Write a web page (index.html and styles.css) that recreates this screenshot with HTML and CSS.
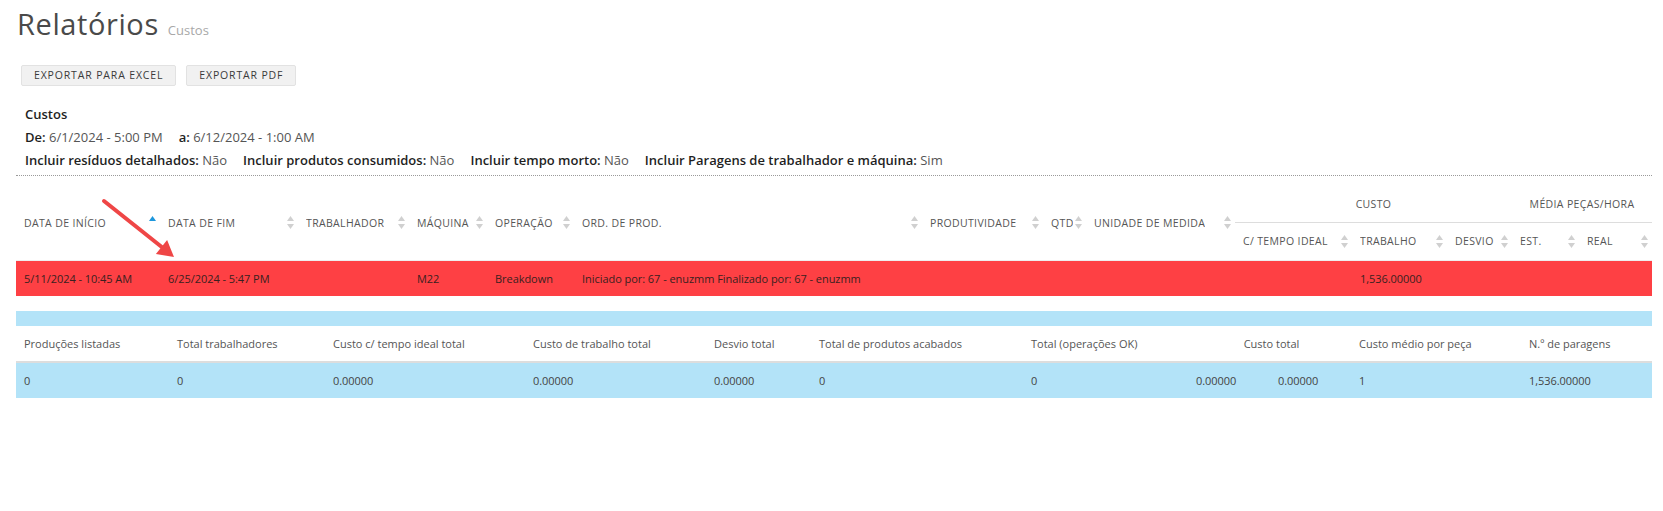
FILE: index.html
```html
<!DOCTYPE html>
<html lang="pt">
<head>
<meta charset="utf-8">
<title>Relatórios - Custos</title>
<link rel="stylesheet" href="styles.css">
</head>
<body>
<div class="page">
  <header class="title-bar">
    <h1 class="title">Relatórios</h1>
    <span class="subtitle">Custos</span>
  </header>

  <div class="actions">
    <button class="btn" type="button">Exportar para Excel</button>
    <button class="btn" type="button">Exportar PDF</button>
  </div>

  <section class="info">
    <div class="info-title">Custos</div>
    <div class="info-line">
      <span class="info-item"><b>De:</b> 6/1/2024 - 5:00 PM</span>
      <span class="info-item"><b>a:</b> 6/12/2024 - 1:00 AM</span>
    </div>
    <div class="info-line">
      <span class="info-item"><b>Incluir resíduos detalhados:</b> Não</span>
      <span class="info-item"><b>Incluir produtos consumidos:</b> Não</span>
      <span class="info-item"><b>Incluir tempo morto:</b> Não</span>
      <span class="info-item"><b>Incluir Paragens de trabalhador e máquina:</b> Sim</span>
    </div>
  </section>

  <section class="report">
    <svg class="annot-arrow" width="200" height="100" viewBox="0 0 200 100" aria-hidden="true">
      <line x1="88" y1="25" x2="147" y2="72" stroke="#ef4646" stroke-width="4" stroke-linecap="round"/>
      <polygon points="158,81 139.9,78 151.1,64" fill="#ef4646"/>
    </svg>

    <table class="grid">
      <colgroup>
        <col style="width:144px"><col style="width:138px"><col style="width:111px"><col style="width:78px">
        <col style="width:87px"><col style="width:348px"><col style="width:121px"><col style="width:43px">
        <col style="width:149px"><col style="width:117px"><col style="width:95px"><col style="width:65px">
        <col style="width:67px"><col style="width:73px">
      </colgroup>
      <thead>
        <tr>
          <th rowspan="2"><div class="th-in"><span>Data de início</span><svg class="sort asc" width="7" height="13" viewBox="0 0 7 13"><polygon points="3.5,0 7,5 0,5"/></svg></div></th>
          <th rowspan="2"><div class="th-in"><span>Data de fim</span><svg class="sort" width="7" height="13" viewBox="0 0 7 13"><polygon points="3.5,0 7,5 0,5"/><polygon points="0,8 7,8 3.5,13"/></svg></div></th>
          <th rowspan="2"><div class="th-in"><span>Trabalhador</span><svg class="sort" width="7" height="13" viewBox="0 0 7 13"><polygon points="3.5,0 7,5 0,5"/><polygon points="0,8 7,8 3.5,13"/></svg></div></th>
          <th rowspan="2"><div class="th-in"><span>Máquina</span><svg class="sort" width="7" height="13" viewBox="0 0 7 13"><polygon points="3.5,0 7,5 0,5"/><polygon points="0,8 7,8 3.5,13"/></svg></div></th>
          <th rowspan="2"><div class="th-in"><span>Operação</span><svg class="sort" width="7" height="13" viewBox="0 0 7 13"><polygon points="3.5,0 7,5 0,5"/><polygon points="0,8 7,8 3.5,13"/></svg></div></th>
          <th rowspan="2"><div class="th-in"><span>Ord. de prod.</span><svg class="sort" width="7" height="13" viewBox="0 0 7 13"><polygon points="3.5,0 7,5 0,5"/><polygon points="0,8 7,8 3.5,13"/></svg></div></th>
          <th rowspan="2"><div class="th-in"><span>Produtividade</span><svg class="sort" width="7" height="13" viewBox="0 0 7 13"><polygon points="3.5,0 7,5 0,5"/><polygon points="0,8 7,8 3.5,13"/></svg></div></th>
          <th rowspan="2"><div class="th-in"><span>Qtd</span><svg class="sort" width="7" height="13" viewBox="0 0 7 13"><polygon points="3.5,0 7,5 0,5"/><polygon points="0,8 7,8 3.5,13"/></svg></div></th>
          <th rowspan="2"><div class="th-in"><span>Unidade de medida</span><svg class="sort" width="7" height="13" viewBox="0 0 7 13"><polygon points="3.5,0 7,5 0,5"/><polygon points="0,8 7,8 3.5,13"/></svg></div></th>
          <th colspan="3" class="group">Custo</th>
          <th colspan="2" class="group">Média peças/hora</th>
        </tr>
        <tr class="sub">
          <th><div class="th-in"><span>C/ tempo ideal</span><svg class="sort" width="7" height="13" viewBox="0 0 7 13"><polygon points="3.5,0 7,5 0,5"/><polygon points="0,8 7,8 3.5,13"/></svg></div></th>
          <th><div class="th-in"><span>Trabalho</span><svg class="sort" width="7" height="13" viewBox="0 0 7 13"><polygon points="3.5,0 7,5 0,5"/><polygon points="0,8 7,8 3.5,13"/></svg></div></th>
          <th><div class="th-in"><span>Desvio</span><svg class="sort" width="7" height="13" viewBox="0 0 7 13"><polygon points="3.5,0 7,5 0,5"/><polygon points="0,8 7,8 3.5,13"/></svg></div></th>
          <th><div class="th-in"><span>Est.</span><svg class="sort" width="7" height="13" viewBox="0 0 7 13"><polygon points="3.5,0 7,5 0,5"/><polygon points="0,8 7,8 3.5,13"/></svg></div></th>
          <th><div class="th-in"><span>Real</span><svg class="sort" width="7" height="13" viewBox="0 0 7 13"><polygon points="3.5,0 7,5 0,5"/><polygon points="0,8 7,8 3.5,13"/></svg></div></th>
        </tr>
      </thead>
      <tbody>
        <tr class="row-alert">
          <td>5/11/2024 - 10:45 AM</td>
          <td>6/25/2024 - 5:47 PM</td>
          <td></td>
          <td>M22</td>
          <td>Breakdown</td>
          <td>Iniciado por: 67 - enuzmm Finalizado por: 67 - enuzmm</td>
          <td></td>
          <td></td>
          <td></td>
          <td></td>
          <td>1,536.00000</td>
          <td></td>
          <td></td>
          <td></td>
        </tr>
      </tbody>
    </table>

    <div class="band"></div>

    <table class="totals">
      <colgroup>
        <col style="width:153px"><col style="width:156px"><col style="width:200px"><col style="width:181px">
        <col style="width:105px"><col style="width:212px"><col style="width:165px"><col style="width:82px">
        <col style="width:81px"><col style="width:170px"><col style="width:131px">
      </colgroup>
      <thead>
        <tr>
          <th>Produções listadas</th>
          <th>Total trabalhadores</th>
          <th>Custo c/ tempo ideal total</th>
          <th>Custo de trabalho total</th>
          <th>Desvio total</th>
          <th>Total de produtos acabados</th>
          <th>Total (operações OK)</th>
          <th colspan="2" class="center">Custo total</th>
          <th>Custo médio por peça</th>
          <th>N.º de paragens</th>
        </tr>
      </thead>
      <tbody>
        <tr>
          <td>0</td>
          <td>0</td>
          <td>0.00000</td>
          <td>0.00000</td>
          <td>0.00000</td>
          <td>0</td>
          <td>0</td>
          <td>0.00000</td>
          <td>0.00000</td>
          <td>1</td>
          <td>1,536.00000</td>
        </tr>
      </tbody>
    </table>
  </section>
</div>
</body>
</html>
```

FILE: styles.css
```css
* { box-sizing: border-box; }

html, body {
  margin: 0;
  padding: 0;
  background: #ffffff;
}

body {
  font-family: "Open Sans", "Noto Sans", "Liberation Sans", sans-serif;
  color: #333;
}

.page {
  padding: 4px 11px 0 16px;
}

.title-bar {
  display: flex;
  align-items: baseline;
  gap: 9px;
  padding-left: 1px;
}

.title {
  margin: 0;
  font-size: 29px;
  font-weight: 400;
  line-height: 40px;
  letter-spacing: 0.6px;
  color: #4a4a4a;
}

.subtitle {
  font-size: 13px;
  color: #a8a8a8;
}

.actions {
  display: flex;
  gap: 10px;
  margin-top: 21px;
  padding-left: 5px;
}

.btn {
  height: 21px;
  padding: 0 12px;
  border: 1px solid #e2e2e2;
  border-radius: 2px;
  background: #f1f1f1;
  font-family: inherit;
  font-size: 10.5px;
  letter-spacing: 0.85px;
  text-transform: uppercase;
  color: #3a3a3a;
  line-height: 19px;
}

.info {
  margin-top: 17px;
  padding-left: 9px;
  padding-bottom: 3px;
  border-bottom: 1px dotted #9a9a9a;
  font-size: 13px;
  line-height: 23px;
  color: #555;
}

.info b {
  font-weight: 600;
  color: #1f1f1f;
}

.info-title {
  font-weight: 600;
  color: #1f1f1f;
}

.info-line {
  display: flex;
  gap: 16px;
}

.report {
  position: relative;
  padding-top: 10px;
}

.annot-arrow {
  position: absolute;
  left: 0;
  top: 0;
  overflow: visible;
}

.grid,
.totals {
  width: 1636px;
  table-layout: fixed;
  border-collapse: collapse;
}

.grid th {
  padding: 0 4px 0 8px;
  font-size: 10.5px;
  font-weight: 400;
  letter-spacing: 0.35px;
  text-transform: uppercase;
  text-align: left;
  color: #555;
  white-space: nowrap;
}

.grid thead tr:first-child {
  height: 36px;
}

.grid thead tr.sub {
  height: 38px;
}

.grid thead tr.sub th {
  border-bottom: 1px solid #eeeeee;
}

.grid th[rowspan] {
  border-bottom: 1px solid #eeeeee;
}

.grid th.group {
  text-align: center;
  border-bottom: 1px solid #dddddd;
  padding: 0;
}

.th-in {
  display: flex;
  align-items: center;
  justify-content: space-between;
  gap: 2px;
}

.th-in span {
  overflow: hidden;
}

.sort {
  flex: none;
  fill: #d0d0d0;
}

.sort.asc {
  fill: #1d97dc;
}

.grid td {
  height: 36px;
  padding: 0 4px 0 8px;
  font-size: 11px;
  letter-spacing: -0.05px;
  color: #3a2020;
  white-space: nowrap;
  overflow: hidden;
}

.row-alert {
  background: #fe4044;
}

.band {
  height: 15px;
  margin-top: 15px;
  background: #b3e3f8;
}

.totals th {
  height: 36px;
  padding: 0 4px 0 8px;
  font-size: 11px;
  letter-spacing: 0;
  font-weight: 400;
  text-align: left;
  color: #555;
  border-bottom: 2px solid #dddddd;
  white-space: nowrap;
}

.totals th.center {
  text-align: center;
}

.totals td {
  height: 36px;
  padding: 0 4px 0 8px;
  font-size: 11px;
  letter-spacing: -0.05px;
  color: #444;
  background: #b3e3f8;
  white-space: nowrap;
}
```
